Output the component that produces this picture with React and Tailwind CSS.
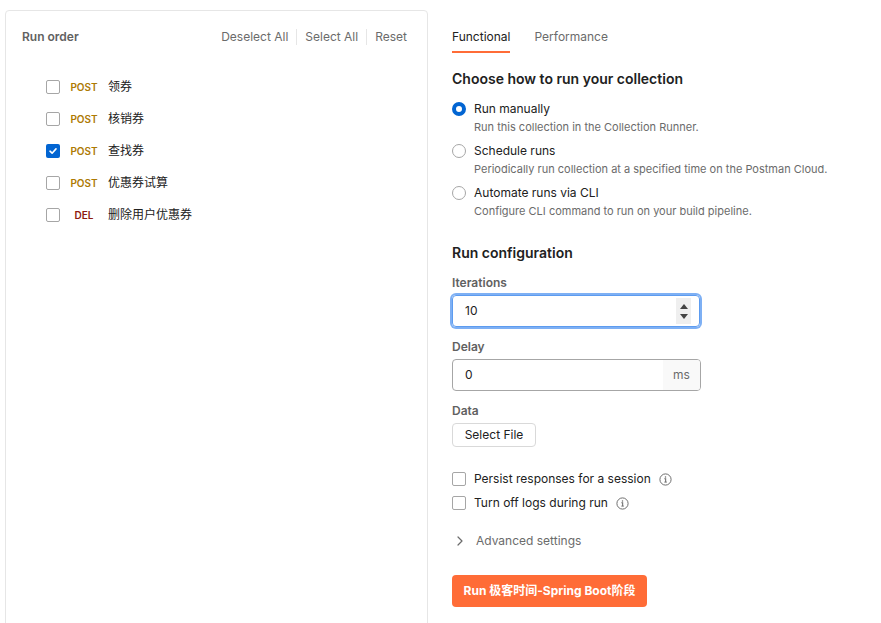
import React from "react";

const FONT = "font-['Inter','Noto_Sans_CJK_SC',sans-serif]";

function Checkbox({ checked }) {
  if (checked) {
    return (
      <div className="w-[14px] h-[14px] rounded-[2px] bg-[#0265d2] flex items-center justify-center shrink-0">
        <svg width="10" height="10" viewBox="0 0 10 10" fill="none">
          <path d="M2 5.2 L4.1 7.2 L8 2.9" stroke="white" strokeWidth="1.6" strokeLinecap="round" strokeLinejoin="round" />
        </svg>
      </div>
    );
  }
  return <div className="w-[14px] h-[14px] rounded-[2px] border border-[#a6a6a6] bg-white shrink-0" />;
}

function Radio({ checked }) {
  if (checked) {
    return <div className="w-[14px] h-[14px] rounded-full border-[4px] border-[#0265d2] bg-white shrink-0" />;
  }
  return <div className="w-[14px] h-[14px] rounded-full border border-[#a6a6a6] bg-white shrink-0" />;
}

function InfoIcon() {
  return (
    <svg width="13" height="13" viewBox="0 0 16 16" fill="none" className="shrink-0">
      <circle cx="8" cy="8" r="6.9" stroke="#6b6b6b" strokeWidth="1.2" />
      <path d="M6.6 7 H8.2 V11.2" stroke="#6b6b6b" strokeWidth="1.3" />
      <path d="M6.6 11.2 H9.6" stroke="#6b6b6b" strokeWidth="1.2" />
      <circle cx="8" cy="4.8" r="0.9" fill="#6b6b6b" />
    </svg>
  );
}

const requests = [
  { method: "POST", name: "领券", checked: false },
  { method: "POST", name: "核销券", checked: false },
  { method: "POST", name: "查找券", checked: true },
  { method: "POST", name: "优惠券试算", checked: false },
  { method: "DEL", name: "删除用户优惠券", checked: false },
];

const runOptions = [
  { label: "Run manually", desc: "Run this collection in the Collection Runner.", checked: true },
  { label: "Schedule runs", desc: "Periodically run collection at a specified time on the Postman Cloud.", checked: false },
  { label: "Automate runs via CLI", desc: "Configure CLI command to run on your build pipeline.", checked: false },
];

export default function App() {
  return (
    <div className={`w-[881px] h-[623px] overflow-hidden bg-white flex items-start ${FONT}`}>
      {/* Left panel */}
      <div className="ml-[5px] mt-[10px] w-[423px] h-[640px] border border-[#e6e6e6] rounded-[4px] shrink-0">
        <div className="mt-[16px] h-[20px] flex items-center justify-between pl-[16px] pr-[20px]">
          <span className="text-[12px] font-semibold text-[#616161]">Run order</span>
          <div className="flex items-center text-[12px] text-[#6b6b6b]">
            <span className="px-[8px]">Deselect All</span>
            <span className="w-px h-[16px] bg-[#e6e6e6]" />
            <span className="px-[8px]">Select All</span>
            <span className="w-px h-[16px] bg-[#e6e6e6]" />
            <span className="pl-[8px]">Reset</span>
          </div>
        </div>
        <div className="mt-[24px] pl-[40px] flex flex-col">
          {requests.map((r) => (
            <div key={r.name} className="h-[32px] flex items-center">
              <Checkbox checked={r.checked} />
              <span
                className={`ml-[10px] w-[28px] text-center text-[10px] font-semibold ${
                  r.method === "DEL" ? "text-[#8e1a10]" : "text-[#ad7a03]"
                }`}
              >
                {r.method}
              </span>
              <span className="ml-[10px] text-[12px] text-[#212121]">{r.name}</span>
            </div>
          ))}
        </div>
      </div>

      {/* Right column */}
      <div className="ml-[24px] pt-[27px] flex flex-col">
        {/* Tabs */}
        <div className="flex gap-[24px] text-[12px]">
          <div className="flex flex-col">
            <span className="h-[20px] leading-[20px] text-[#212121]">Functional</span>
            <span className="mt-[4px] h-[2px] bg-[#ff6c37]" />
          </div>
          <div className="flex flex-col">
            <span className="h-[20px] leading-[20px] text-[#6b6b6b]">Performance</span>
          </div>
        </div>

        <div className="mt-[16px] h-[20px] leading-[20px] text-[14px] font-semibold text-[#212121]">
          Choose how to run your collection
        </div>

        <div className="mt-[10px] flex flex-col gap-[6px]">
          {runOptions.map((o) => (
            <div key={o.label} className="flex flex-col">
              <div className="h-[20px] flex items-center">
                <Radio checked={o.checked} />
                <span className="ml-[8px] text-[12px] text-[#212121]">{o.label}</span>
              </div>
              <div className="pl-[22px] h-[16px] leading-[16px] text-[11px] text-[#6b6b6b]">{o.desc}</div>
            </div>
          ))}
        </div>

        <div className="mt-[24px] h-[20px] leading-[20px] text-[14px] font-semibold text-[#212121]">
          Run configuration
        </div>

        <div className="mt-[10px] h-[20px] leading-[20px] text-[12px] font-semibold text-[#616161]">Iterations</div>
        <div className="mt-[2px] w-[248px] h-[32px] rounded-[4px] border border-[#5d9cf0] ring-2 ring-[#7eb0f4] flex items-center justify-between pl-[12px] pr-[8px]">
          <span className="text-[12px] text-[#212121]">10</span>
          <div className="w-[15px] h-[26px] bg-[#efefef] flex flex-col items-center justify-center gap-[5px]">
            <svg width="8" height="5" viewBox="0 0 8 5"><path d="M0 5 L4 0 L8 5 Z" fill="#444" /></svg>
            <svg width="8" height="5" viewBox="0 0 8 5"><path d="M0 0 L4 5 L8 0 Z" fill="#444" /></svg>
          </div>
        </div>

        <div className="mt-[10px] h-[20px] leading-[20px] text-[12px] font-semibold text-[#616161]">Delay</div>
        <div className="mt-[2px] w-[249px] h-[32px] rounded-[4px] border border-[#a6a6a6] flex items-stretch overflow-hidden">
          <div className="flex-1 flex items-center pl-[12px] text-[12px] text-[#212121]">0</div>
          <div className="w-[37px] bg-[#f9f9f9] flex items-center justify-center text-[12px] text-[#6b6b6b]">ms</div>
        </div>

        <div className="mt-[10px] h-[20px] leading-[20px] text-[12px] font-semibold text-[#616161]">Data</div>
        <div className="mt-[2px] w-[84px] h-[24px] rounded-[4px] border border-[#d9d9d9] flex items-center justify-center text-[12px] text-[#212121]">
          Select File
        </div>

        <div className="mt-[22px] flex flex-col gap-[4px]">
          <div className="h-[20px] flex items-center">
            <Checkbox checked={false} />
            <span className="ml-[8px] text-[12px] text-[#212121]">Persist responses for a session</span>
            <span className="ml-[8px] flex"><InfoIcon /></span>
          </div>
          <div className="h-[20px] flex items-center">
            <Checkbox checked={false} />
            <span className="ml-[8px] text-[12px] text-[#212121]">Turn off logs during run</span>
            <span className="ml-[8px] flex"><InfoIcon /></span>
          </div>
        </div>

        <div className="mt-[18px] h-[20px] flex items-center">
          <svg width="16" height="16" viewBox="0 0 16 16" fill="none">
            <path d="M6 4 L10 8 L6 12" stroke="#6b6b6b" strokeWidth="1.2" strokeLinecap="round" strokeLinejoin="round" />
          </svg>
          <span className="ml-[8px] text-[12px] text-[#6b6b6b]">Advanced settings</span>
        </div>

        <div className="mt-[24px] w-[195px] h-[32px] rounded-[4px] bg-[#ff6c37] flex items-center justify-center text-[12px] font-bold text-white">
          Run 极客时间-Spring Boot阶段
        </div>
      </div>
    </div>
  );
}
